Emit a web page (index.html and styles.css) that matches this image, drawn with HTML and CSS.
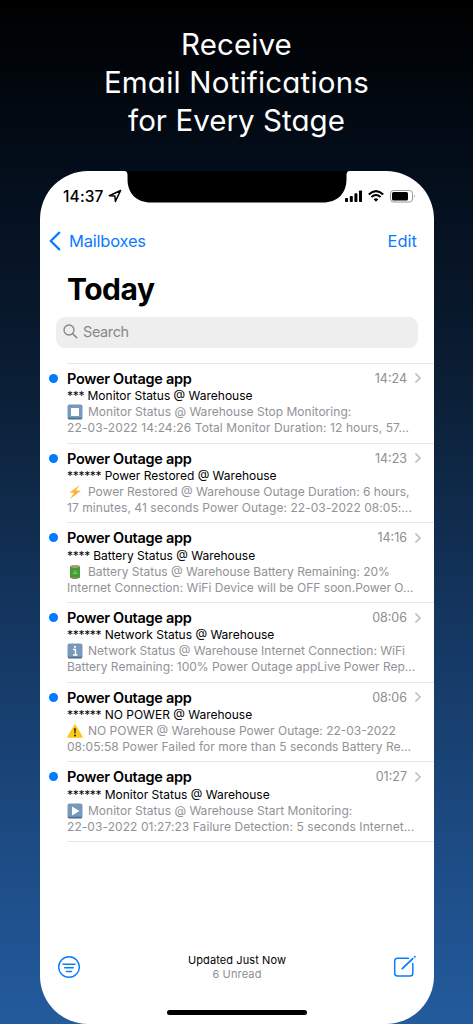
FILE: index.html
```html
<!DOCTYPE html>
<html lang="en">
<head>
<meta charset="utf-8">
<title>Email Notifications</title>
<link rel="stylesheet" href="styles.css">
</head>
<body>
<h1 class="headline"><span class="h-a">Receive</span><span class="h-b">Email Notifications</span><span class="h-c">for Every Stage</span></h1>
<main class="phone">
  <svg class="notch" width="224" height="32" viewBox="0 0 224 32"><path d="M0 0H224Q221.500 .5 221.500 4V8C221.500 23 212 31.500 198 31.500H26C12 31.500 2.500 23 2.500 8V4Q2.500 .5 0 0Z"/></svg>
  <header class="status">
    <span class="clock">14:37</span>
    <svg class="loc" width="14" height="14" viewBox="0 0 14 14" fill="none" stroke="#000" stroke-width="1.5" stroke-linejoin="round"><path d="M12.6 1.5 1.3 6.7 6.9 7.1 7.4 12.4Z"/></svg>
    <span class="grow"></span>
    <svg width="18" height="12" viewBox="0 0 18 12"><rect x="0" y="8" width="3" height="4" rx=".8"/><rect x="4.8" y="6" width="3" height="6" rx=".8"/><rect x="9.4" y="3.3" width="3" height="8.700" rx=".8"/><rect x="14" y="0.5" width="3" height="11.500" rx=".8"/></svg>
    <svg class="wifi" width="16" height="12" viewBox="0 0 16 12" fill="none" stroke="#000" stroke-width="2"><path d="M.8 4.400Q8-2.200 15.200 4.400M3.400 7.100Q8 3 12.600 7.100"/><path d="M5.600 9.200Q8 7.300 10.400 9.200L8 11.700Z" fill="#000" stroke="none"/></svg>
    <svg class="batt" width="26" height="13" viewBox="0 0 26 13"><rect x=".5" y=".5" width="22" height="11.500" rx="3" fill="none" stroke="#999"/><rect x="2" y="2" width="16" height="8.500" rx="1.500"/><path d="M24 4.300Q25.500 6.200 24 8.200Z" fill="#999"/></svg>
  </header>
  <nav class="nav">
    <svg width="12" height="20" viewBox="0 0 12 20" fill="none" stroke="#0a7cff" stroke-width="2.3" stroke-linecap="round" stroke-linejoin="round"><path d="M10.300 1.700 1.700 10 10.300 18.300"/></svg>
    <span class="back">Mailboxes</span><span class="edit">Edit</span>
  </nav>
  <h2 class="title">Today</h2>
  <div class="search">
    <svg width="15" height="15" viewBox="0 0 15 15" fill="none" stroke="#85858a" stroke-width="1.3" stroke-linecap="round"><circle cx="6" cy="6" r="5"/><path d="M9.700 9.700 13.700 13.700" stroke-width="1.6"/></svg>
    <span>Search</span>
  </div>
  <ul class="list">
    <li class="mail"><i class="dot"></i><div class="top"><b>Power Outage app</b><time>14:24</time><svg class="chev" viewBox="0 0 8 12"><path d="M1.500 1.500 6 6 1.500 10.500"/></svg></div>
      <p class="subj"><span class="stars">***</span> Monitor Status @ Warehouse</p>
      <p class="line p1"><svg class="emoji" viewBox="0 0 16 16"><rect x=".5" y=".5" width="15" height="15" rx="2" fill="#7899ba"/><path d="M1 14.500h14" stroke="#4c708f" stroke-width="1.500"/><rect x="4" y="4" width="8" height="8" fill="#fff"/></svg>Monitor Status @ Warehouse Stop Monitoring:</p>
      <p class="line l1">22-03-2022 14:24:26 Total Monitor Duration: 12 hours, 57...</p></li>
    <li class="mail"><i class="dot"></i><div class="top"><b>Power Outage app</b><time>14:23</time><svg class="chev" viewBox="0 0 8 12"><path d="M1.500 1.500 6 6 1.500 10.500"/></svg></div>
      <p class="subj"><span class="stars">******</span> Power Restored @ Warehouse</p>
      <p class="line"><svg class="emoji" viewBox="0 0 16 16"><path d="M12.500 1 2.500 8.700 7 8.800 3 15 14 6.800 9 6.500Z" fill="#fbb638"/></svg>Power Restored @ Warehouse Outage Duration: 6 hours,</p>
      <p class="line l2">17 minutes, 41 seconds Power Outage: 22-03-2022 08:05:...</p></li>
    <li class="mail"><i class="dot"></i><div class="top"><b>Power Outage app</b><time>14:16</time><svg class="chev" viewBox="0 0 8 12"><path d="M1.500 1.500 6 6 1.500 10.500"/></svg></div>
      <p class="subj"><span class="stars">****</span> Battery Status @ Warehouse</p>
      <p class="line"><svg class="emoji" viewBox="0 0 16 16"><path d="M3 2.500Q8 0 13 2.500V13.500Q8 16 3 13.500Z" fill="#459c35"/><ellipse cx="8" cy="2.500" rx="4.700" ry="1.400" fill="#ad9a78"/><path d="M3 13Q8 15.500 13 13" fill="none" stroke="#8c8063" stroke-width="1.2"/><path d="M6 9.500 8 6.500 10 9.500Z" fill="none" stroke="#8ccb75" stroke-width=".8"/></svg>Battery Status @ Warehouse Battery Remaining: 20%</p>
      <p class="line l3">Internet Connection: WiFi Device will be OFF soon.Power O...</p></li>
    <li class="mail"><i class="dot"></i><div class="top"><b>Power Outage app</b><time>08:06</time><svg class="chev" viewBox="0 0 8 12"><path d="M1.500 1.500 6 6 1.500 10.500"/></svg></div>
      <p class="subj"><span class="stars">******</span> Network Status @ Warehouse</p>
      <p class="line"><svg class="emoji" viewBox="0 0 16 16"><rect x=".5" y=".5" width="15" height="15" rx="2" fill="#7899ba"/><path d="M1 14.500h14" stroke="#4c708f" stroke-width="1.500"/><path d="M6 6.500H8.500V12M6 12H10.500" stroke="#fff" stroke-width="1.4" fill="none"/><circle cx="8" cy="3.800" r="1.100" fill="#fff"/></svg>Network Status @ Warehouse Internet Connection: WiFi</p>
      <p class="line l4">Battery Remaining: 100% Power Outage appLive Power Rep...</p></li>
    <li class="mail"><i class="dot"></i><div class="top"><b>Power Outage app</b><time>08:06</time><svg class="chev" viewBox="0 0 8 12"><path d="M1.500 1.500 6 6 1.500 10.500"/></svg></div>
      <p class="subj"><span class="stars">******</span> NO POWER @ Warehouse</p>
      <p class="line"><svg class="emoji" viewBox="0 0 16 16"><path d="M8 2.200 15 14H1Z" fill="#fdc916" stroke="#fdc916" stroke-width="1.500" stroke-linejoin="round"/><path d="M7.100 5.300H8.900L8.500 10.500H7.500Z" fill="#222"/><circle cx="8" cy="12.500" r="1" fill="#222"/></svg>NO POWER @ Warehouse Power Outage: 22-03-2022</p>
      <p class="line l5">08:05:58 Power Failed for more than 5 seconds Battery Re...</p></li>
    <li class="mail"><i class="dot"></i><div class="top"><b>Power Outage app</b><time>01:27</time><svg class="chev" viewBox="0 0 8 12"><path d="M1.500 1.500 6 6 1.500 10.500"/></svg></div>
      <p class="subj"><span class="stars">******</span> Monitor Status @ Warehouse</p>
      <p class="line p6"><svg class="emoji" viewBox="0 0 16 16"><rect x=".5" y=".5" width="15" height="15" rx="2" fill="#7899ba"/><path d="M1 14.500h14" stroke="#4c708f" stroke-width="1.500"/><path d="M5 3.500 12.500 8 5 12.500Z" fill="#fff"/></svg>Monitor Status @ Warehouse Start Monitoring:</p>
      <p class="line l6">22-03-2022 01:27:23 Failure Detection: 5 seconds Internet...</p></li>
  </ul>
  <footer class="foot">
    <svg width="24" height="24" viewBox="0 0 24 24" fill="none" stroke="#0a7cff" stroke-width="1.4" stroke-linecap="round"><circle cx="12" cy="12" r="10.300"/><path d="M6 9.300H18M7.700 12.800H16.300M9.500 16.500H14.500"/></svg>
    <div class="sync"><span class="upd">Updated Just Now</span><span class="unread">6 Unread</span></div>
    <svg width="24" height="24" viewBox="0 0 24 24" fill="none" stroke="#0a7cff" stroke-width="1.5" stroke-linecap="round"><path d="M15.500 3.300H4.500Q1.700 3.300 1.700 6.100V18.200Q1.700 21 4.500 21H17Q19.800 21 19.800 18.200V8.500"/><path d="M9.300 13.700 19.700 3.700M21.600 1.900 21.900 1.600" stroke-width="1.8"/></svg>
  </footer>
  <div class="home"></div>
</main>
</body>
</html>
```

FILE: styles.css
```css
* { box-sizing: border-box; margin: 0; padding: 0; }
body { width: 473px; height: 1024px; overflow: hidden; padding-top: 25px; font-family: Inter, "Liberation Sans", sans-serif; background: linear-gradient(#000 0, #030c18 150px, #0a1d33 370px, #153965 650px, #22599a 1000px, #235b9c 1024px); }
.headline { height: 146px; display: flex; flex-direction: column; align-items: center; color: #fff; font-weight: 400; font-size: 29.5px; line-height: 38.2px; font-feature-settings: "cv11"; white-space: nowrap; }
.h-a { letter-spacing: .1px; }
.h-b { letter-spacing: .2px; }
.h-c { letter-spacing: .05px; }
.phone { position: relative; width: 394px; height: 853px; margin-left: 40px; background: #fff; border-radius: 48px; display: flex; flex-direction: column; overflow: hidden; }
.notch { position: absolute; left: 84.5px; top: 0; }
.status { height: 50px; flex: none; padding: 0 18px 0 23px; display: flex; align-items: center; }
.clock { font-size: 15.5px; font-weight: 550; letter-spacing: .15px; }
.loc { margin-left: 4px; }
.grow { flex: 1; }
.wifi { margin-left: 5px; }
.batt { margin-left: 6px; }
.nav { height: 39px; margin-bottom: 1px; flex: none; display: flex; align-items: center; padding: 0 17px 0 9px; color: #0a7cff; font-size: 16.5px; letter-spacing: -.22px; }
.back { margin-left: 8px; flex: 1; }
.edit { letter-spacing: 0; }
.title { height: 56px; flex: none; padding-left: 27px; font-size: 30px; font-weight: 700; line-height: 56px; letter-spacing: -.5px; }
.search { height: 31px; flex: none; margin: 0 16px; border-radius: 9px; background: #eee; color: #88888c; display: flex; align-items: center; gap: 5px; padding-left: 7px; padding-bottom: 2px; font-size: 14.5px; letter-spacing: -.4px; }
.list { margin: 15px 0 0 27px; list-style: none; border-top: 1px solid #e6e6e8; }
.mail { position: relative; height: 79.7px; border-bottom: 1px solid #e6e6e8; padding-top: 5.6px; white-space: nowrap; }
.dot { position: absolute; left: -18px; top: 10px; width: 9px; height: 9px; border-radius: 50%; background: #007aff; }
.top { height: 17.7px; display: flex; align-items: center; padding-right: 12px; font-size: 14.5px; }
.top b { flex: 1; font-weight: 600; letter-spacing: -.28px; }
.top time { font-size: 12.5px; color: #8e8e93; }
.chev { width: 8px; height: 12px; margin-left: 7px; fill: none; stroke: #bdbdc0; stroke-width: 1.6; }
.subj { font-size: 12px; line-height: 17px; height: 17px; }
.stars { letter-spacing: -.3px; }
.line { font-size: 12px; line-height: 16px; height: 16px; color: #929296; display: flex; align-items: center; }
.p1, .p6 { letter-spacing: .02px; }
.l1 { letter-spacing: .1px; }
.l2 { letter-spacing: .06px; }
.l3 { letter-spacing: .02px; }
.l5 { letter-spacing: .04px; }
.l6 { letter-spacing: .07px; }
.emoji { width: 16px; height: 16px; margin-right: 5px; }
.foot { margin-top: auto; margin-bottom: 40px; height: 34px; padding: 0 17px; display: flex; align-items: center; justify-content: space-between; }
.sync { display: flex; flex-direction: column; align-items: center; font-size: 11px; line-height: 14px; }
.upd { letter-spacing: .1px; }
.unread { color: #8e8e93; letter-spacing: .15px; }
.home { position: absolute; left: 127px; top: 839px; width: 140px; height: 5px; border-radius: 3px; background: #000; }
```
